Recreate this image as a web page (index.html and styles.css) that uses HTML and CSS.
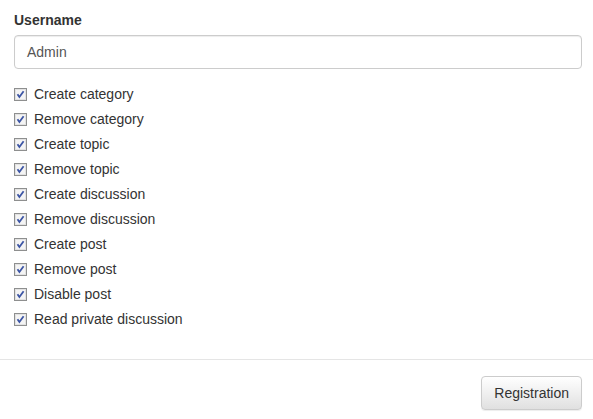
FILE: index.html
```html
<!DOCTYPE html>
<html>
<head>
<meta charset="utf-8">
<link rel="stylesheet" href="styles.css">
</head>
<body>
<div class="modal">
  <div class="modal-body">
    <div class="form-group">
      <label class="field-label">Username</label>
      <div class="input">Admin</div>
    </div>
    <div class="checks">
      <div class="check"><span class="box"><svg width="13" height="13" viewBox="0 0 13 13"><rect x="0.5" y="0.5" width="12" height="12" fill="#f4f4f4" stroke="#8e8f8f"/><rect x="1.5" y="1.5" width="10" height="10" fill="none" stroke="#e2e2e2"/><path d="M3.5 6.2 L5.4 9 L9.6 3.3" fill="none" stroke="#3b54a4" stroke-width="1.8"/></svg></span>Create category</div>
      <div class="check"><span class="box"><svg width="13" height="13" viewBox="0 0 13 13"><rect x="0.5" y="0.5" width="12" height="12" fill="#f4f4f4" stroke="#8e8f8f"/><rect x="1.5" y="1.5" width="10" height="10" fill="none" stroke="#e2e2e2"/><path d="M3.5 6.2 L5.4 9 L9.6 3.3" fill="none" stroke="#3b54a4" stroke-width="1.8"/></svg></span>Remove category</div>
      <div class="check"><span class="box"><svg width="13" height="13" viewBox="0 0 13 13"><rect x="0.5" y="0.5" width="12" height="12" fill="#f4f4f4" stroke="#8e8f8f"/><rect x="1.5" y="1.5" width="10" height="10" fill="none" stroke="#e2e2e2"/><path d="M3.5 6.2 L5.4 9 L9.6 3.3" fill="none" stroke="#3b54a4" stroke-width="1.8"/></svg></span>Create topic</div>
      <div class="check"><span class="box"><svg width="13" height="13" viewBox="0 0 13 13"><rect x="0.5" y="0.5" width="12" height="12" fill="#f4f4f4" stroke="#8e8f8f"/><rect x="1.5" y="1.5" width="10" height="10" fill="none" stroke="#e2e2e2"/><path d="M3.5 6.2 L5.4 9 L9.6 3.3" fill="none" stroke="#3b54a4" stroke-width="1.8"/></svg></span>Remove topic</div>
      <div class="check"><span class="box"><svg width="13" height="13" viewBox="0 0 13 13"><rect x="0.5" y="0.5" width="12" height="12" fill="#f4f4f4" stroke="#8e8f8f"/><rect x="1.5" y="1.5" width="10" height="10" fill="none" stroke="#e2e2e2"/><path d="M3.5 6.2 L5.4 9 L9.6 3.3" fill="none" stroke="#3b54a4" stroke-width="1.8"/></svg></span>Create discussion</div>
      <div class="check"><span class="box"><svg width="13" height="13" viewBox="0 0 13 13"><rect x="0.5" y="0.5" width="12" height="12" fill="#f4f4f4" stroke="#8e8f8f"/><rect x="1.5" y="1.5" width="10" height="10" fill="none" stroke="#e2e2e2"/><path d="M3.5 6.2 L5.4 9 L9.6 3.3" fill="none" stroke="#3b54a4" stroke-width="1.8"/></svg></span>Remove discussion</div>
      <div class="check"><span class="box"><svg width="13" height="13" viewBox="0 0 13 13"><rect x="0.5" y="0.5" width="12" height="12" fill="#f4f4f4" stroke="#8e8f8f"/><rect x="1.5" y="1.5" width="10" height="10" fill="none" stroke="#e2e2e2"/><path d="M3.5 6.2 L5.4 9 L9.6 3.3" fill="none" stroke="#3b54a4" stroke-width="1.8"/></svg></span>Create post</div>
      <div class="check"><span class="box"><svg width="13" height="13" viewBox="0 0 13 13"><rect x="0.5" y="0.5" width="12" height="12" fill="#f4f4f4" stroke="#8e8f8f"/><rect x="1.5" y="1.5" width="10" height="10" fill="none" stroke="#e2e2e2"/><path d="M3.5 6.2 L5.4 9 L9.6 3.3" fill="none" stroke="#3b54a4" stroke-width="1.8"/></svg></span>Remove post</div>
      <div class="check"><span class="box"><svg width="13" height="13" viewBox="0 0 13 13"><rect x="0.5" y="0.5" width="12" height="12" fill="#f4f4f4" stroke="#8e8f8f"/><rect x="1.5" y="1.5" width="10" height="10" fill="none" stroke="#e2e2e2"/><path d="M3.5 6.2 L5.4 9 L9.6 3.3" fill="none" stroke="#3b54a4" stroke-width="1.8"/></svg></span>Disable post</div>
      <div class="check"><span class="box"><svg width="13" height="13" viewBox="0 0 13 13"><rect x="0.5" y="0.5" width="12" height="12" fill="#f4f4f4" stroke="#8e8f8f"/><rect x="1.5" y="1.5" width="10" height="10" fill="none" stroke="#e2e2e2"/><path d="M3.5 6.2 L5.4 9 L9.6 3.3" fill="none" stroke="#3b54a4" stroke-width="1.8"/></svg></span>Read private discussion</div>
    </div>
  </div>
  <div class="modal-footer">
    <button class="btn">Registration</button>
  </div>
</div>
</body>
</html>
```

FILE: styles.css
```css
html, body {
  margin: 0;
  padding: 0;
  background: #fff;
}
body {
  font-family: "Liberation Sans", Arial, sans-serif;
  font-size: 14px;
  line-height: 20px;
  color: #333;
}
.modal {
  width: 593px;
}
.modal-body {
  padding: 10px 11px 30px 14px;
}
.form-group {
  margin-bottom: 15px;
}
.field-label {
  display: block;
  font-weight: bold;
  margin-bottom: 5px;
}
.input {
  height: 34px;
  box-sizing: border-box;
  border: 1px solid #ccc;
  border-radius: 4px;
  padding: 6px 12px;
  color: #555;
  box-shadow: inset 0 1px 1px rgba(0,0,0,0.075);
}
.checks {
  display: flex;
  flex-direction: column;
  gap: 5px;
}
.check {
  display: flex;
  align-items: center;
  height: 20px;
}
.box {
  display: flex;
  width: 13px;
  height: 13px;
  margin-right: 7px;
}
.modal-footer {
  border-top: 1px solid #e5e5e5;
  padding: 16px 11px 15px;
  display: flex;
  justify-content: flex-end;
}
.btn {
  font-family: inherit;
  font-size: 14px;
  line-height: 20px;
  color: #333;
  height: 34px;
  padding: 6px 12px;
  border: 1px solid #ccc;
  border-radius: 4px;
  background: linear-gradient(#fff 0, #e0e0e0 100%);
  box-shadow: inset 0 1px 0 rgba(255,255,255,.15), 0 1px 1px rgba(0,0,0,.075);
}
```
